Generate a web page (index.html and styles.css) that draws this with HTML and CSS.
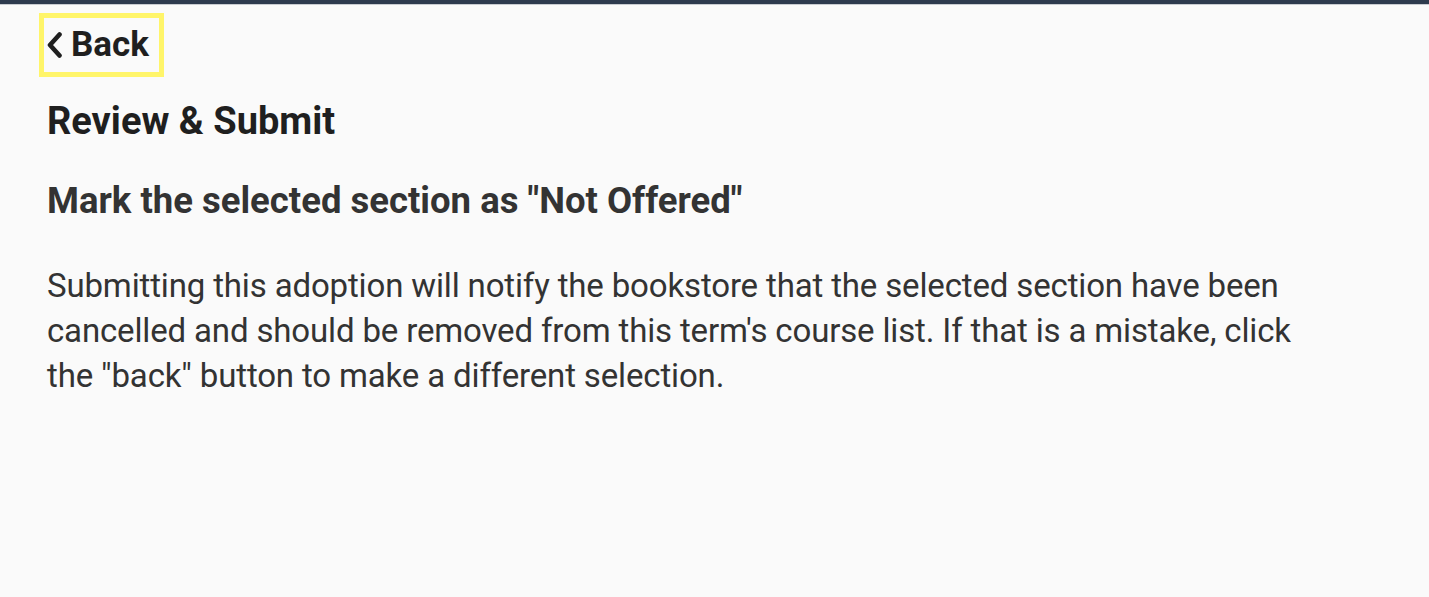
FILE: index.html
```html
<!DOCTYPE html>
<html>
  <head>
    <meta name="viewport" content="width=device-width,initial-scale=1.0">
    <title>Review &amp; Submit</title>
    <link rel="stylesheet" href="styles.css">
  </head>
  <body>
    <div class="topbar"></div>
    <main class="page">
      <a class="backBtn" href="#">
        <svg class="chev" width="15" height="26" viewBox="0 0 15 26" aria-hidden="true">
          <path d="M12.5 2.5 L3 13 L12.5 23.5" fill="none" stroke="#1f1f1f" stroke-width="4.6" stroke-linecap="round" stroke-linejoin="round"/>
        </svg>
        <span>Back</span>
      </a>
      <h1 class="pageTitle">Review &amp; Submit</h1>
      <h2 class="subTitle">Mark the selected section as "Not Offered"</h2>
      <p class="info">Submitting this adoption will notify the bookstore that the selected section have been cancelled and should be removed from this term's course list. If that is a mistake, click the "back" button to make a different selection.</p>
    </main>
  </body>
</html>
```

FILE: styles.css
```css
body{
  margin: 0;
  padding: 0;
  background-color: #fafafa;
  font-family: Roboto, "Noto Sans", Arial, sans-serif;
  color: #333;
}
.topbar{
  height: 4px;
  background-color: #2e3b4e;
  border-bottom: 1px solid #c9ccd1;
}
.page{
  padding: 8px 47px 0px 47px;
}
.backBtn{
  display: inline-flex;
  align-items: center;
  gap: 9px;
  margin-left: -8px;
  padding: 4px 10px 4px 3px;
  border: 5px solid #fff56a;
  color: #1f1f1f;
  text-decoration: none;
  font-weight: 700;
  font-size: 35px;
  line-height: 46px;
}
.chev{
  display: block;
}
.pageTitle{
  margin: 22px 0 0 0;
  font-size: 38px;
  line-height: 44px;
  font-weight: 700;
  color: #1f1f1f;
}
.subTitle{
  margin: 36px 0 0 0;
  font-size: 36.5px;
  line-height: 44px;
  font-weight: 700;
  color: #333;
}
.info{
  margin: 40px 0 0 0;
  max-width: 1290px;
  font-size: 33px;
  line-height: 45px;
  letter-spacing: -0.15px;
  color: #333;
}
```
